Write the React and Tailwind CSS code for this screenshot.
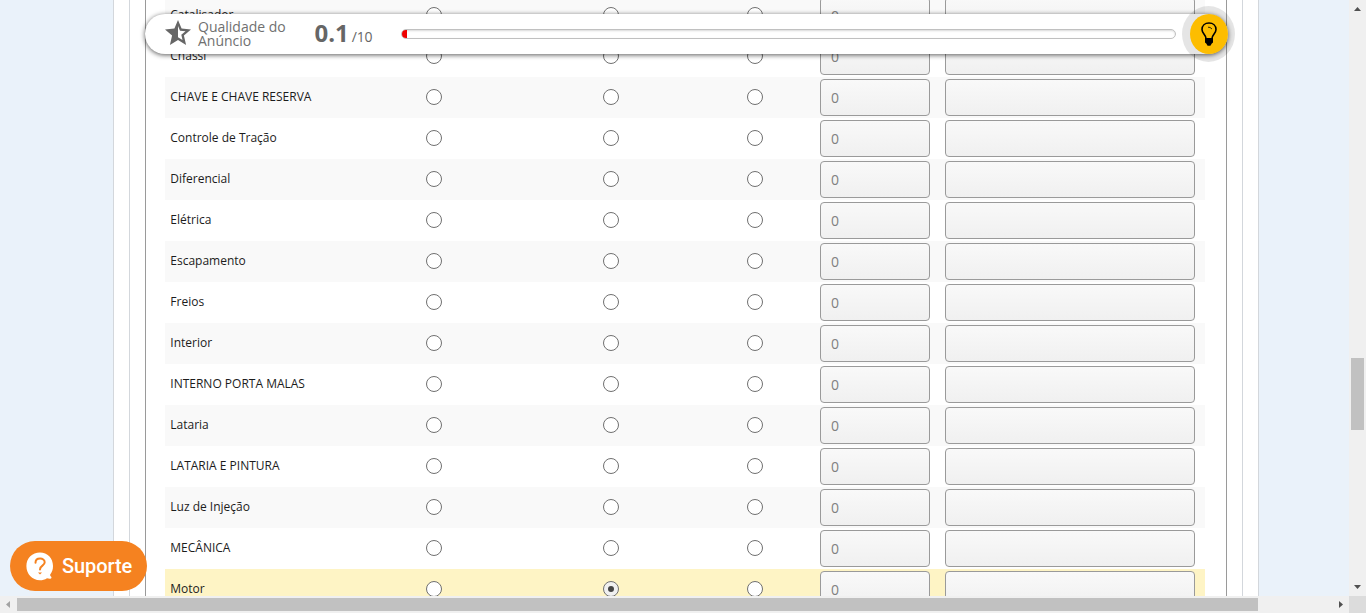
const rows = [
  'Catalisador',
  'Chassi',
  'CHAVE E CHAVE RESERVA',
  'Controle de Tração',
  'Diferencial',
  'Elétrica',
  'Escapamento',
  'Freios',
  'Interior',
  'INTERNO PORTA MALAS',
  'Lataria',
  'LATARIA E PINTURA',
  'Luz de Injeção',
  'MECÂNICA',
  'Motor',
];

function Radio({ checked }) {
  return (
    <span
      className={`flex size-4 items-center justify-center rounded-full border border-[#707070] ${checked ? 'bg-[#f0f0f0]' : 'bg-white'}`}
    >
      {checked && <span className="size-1.5 rounded-full bg-[#444]" />}
    </span>
  );
}

function Row({ label, index }) {
  const selected = label === 'Motor';
  const bg = selected ? 'bg-[#fef4c5]' : index % 2 === 0 ? 'bg-[#f9f9f9]' : 'bg-white';
  return (
    <div className={`grid h-[41px] shrink-0 grid-cols-[261px_177px_144px_73px_125px_250px] items-start ${bg}`}>
      <span className="pt-[11px] pl-[5.3px] text-[12px] leading-[18px] whitespace-nowrap text-[#1c1c1c]">{label}</span>
      <div className="pt-3"><Radio /></div>
      <div className="pt-3"><Radio checked={selected} /></div>
      <div className="pt-3"><Radio /></div>
      <div className="mt-0.5 flex h-[37px] w-[110px] items-center rounded-[4px] border border-[#9a9a9a] bg-linear-to-b from-[#f9f9f9] to-[#f0f0f0] pl-[10px] text-[14px] text-[#808080]">
        0
      </div>
      <div className="mt-0.5 h-[37px] w-[250px] rounded-[4px] border border-[#9a9a9a] bg-linear-to-b from-[#f9f9f9] to-[#f0f0f0]" />
    </div>
  );
}

function QualityBar() {
  return (
    <div className="absolute top-[14px] left-[145px] flex h-10 w-[1083px] items-center rounded-[20px] bg-white shadow-[0_1px_5px_rgba(0,0,0,0.65)]">
      <svg className="ml-5 -mt-0.5 size-[26px] shrink-0" viewBox="0 0 26 26" fill="#666">
        <path
          fillRule="evenodd"
          d="M13 0 L16.6 8.6 L26 9.4 L18.9 15.5 L21.1 25 L13 20 L4.9 25 L7.1 15.5 L0 9.4 L9.4 8.6 Z M13 6 V17.2 L17.5 20 L16.3 14.8 L20.5 11.3 L15 10.8 Z"
        />
      </svg>
      <div className="ml-[7px] w-[116.5px] shrink-0 text-[14px] leading-[14px] text-[#707070]">
        Qualidade do
        <br />
        Anúncio
      </div>
      <div className="-mt-[3px] flex w-[86.5px] shrink-0 items-baseline text-[#666]">
        <span className="text-[24px] leading-[34px] font-bold">0.1</span>
        <span className="ml-[3px] text-[14px] tracking-[-0.2px]">/10</span>
      </div>
      <div className="h-[10px] w-[775px] shrink-0 overflow-hidden rounded-[5px] border border-[#c0c0c0] bg-white shadow-[inset_0_1px_2px_rgba(0,0,0,0.15)]">
        <div className="-mt-px -ml-px h-[10px] w-[6px] bg-[#e00]" />
      </div>
      <div className="absolute top-[-8px] left-[1037px] flex h-14 w-[53px] items-center justify-center rounded-[50%] bg-black/10">
        <div className="flex h-10 w-[38px] items-center justify-center rounded-[50%] bg-[#fdbd00]">
          <svg className="h-6 w-4" viewBox="0 0 16 24" fill="none">
            <path d="M5 16.5 C5 13 1 11.5 1 7.5 C1 3.6 4 1 8 1 S15 3.6 15 7.5 C15 11.5 11 13 11 16.5" stroke="#000" strokeWidth="1.6" />
            <path d="M7 5.2 Q9 4.8 11 7" stroke="#000" strokeWidth=".8" />
            <path d="M4 16 H12 V20.5 L10.8 21.5 L9.4 23.7 H6.6 L5.2 21.5 L4 20.5 Z" fill="#000" />
          </svg>
        </div>
      </div>
    </div>
  );
}

function SupportButton() {
  return (
    <div className="absolute top-[541px] left-[10px] flex h-[50px] w-[137px] items-center rounded-[25px] bg-[#f58220] text-white">
      <svg className="ml-4 h-[29px] w-[28px] shrink-0" viewBox="0 0 28 29" fill="none">
        <path d="M14 0.5 C21.5 .5 27 6.2 27 14 C27 17.6 26.2 19.8 24.2 22.5 C23.7 24 25.5 24.6 25.5 25.4 C25 27.6 22.5 26.4 21 26.2 C18.8 27.6 16.5 28.2 14 28.2 C6 28.2 .4 22 .4 14 C.4 6.2 6.3 .5 14 .5 Z" fill="#fff" />
        <path d="M9.5 10.7 C9.5 5.3 18.7 5.3 18.7 10.3 C18.7 14 14 13.4 14 17.5" stroke="#f58220" strokeWidth="2" strokeLinecap="round" />
        <path d="M12 20.5 H16 L14 22.6 Z" fill="#f58220" />
      </svg>
      <span className="ml-2 font-[Roboto,sans-serif] text-[20px] font-medium tracking-[-0.1px]">Suporte</span>
    </div>
  );
}

export default function App() {
  return (
    <div className="relative grid h-[613px] w-[1366px] grid-cols-[1349px_17px] grid-rows-[596px_17px] overflow-hidden bg-[#f0f0f0] font-['Open_Sans',sans-serif]">
      <main className="flex justify-center overflow-hidden bg-[#eaf2fa] pl-[23px]">
        <div className="w-[1146px] shrink-0 border-x border-[#d3d7dc] bg-white px-[15px]">
          <div className="h-full border-x border-[#d3d7dc] px-[15px]">
            <div className="flex h-full flex-col overflow-hidden border-x border-[#9a9a9a] pr-[21px] pl-[19px]">
              <div className="-mt-[5px] flex flex-col">
                {rows.map((label, index) => (
                  <Row key={label} label={label} index={index} />
                ))}
              </div>
            </div>
          </div>
        </div>
      </main>

      <div className="flex flex-col items-center bg-[#f0f0f0]">
        <svg className="h-[17px] w-[17px]" viewBox="0 0 17 17" fill="#505050">
          <path d="M5 11 L8.5 7 L12 11 Z" />
        </svg>
        <div className="mt-[341px] h-[72px] w-[13px] bg-[#c1c1c1]" />
        <svg className="mt-auto h-[17px] w-[17px]" viewBox="0 0 17 17" fill="#505050">
          <path d="M5 6 L8.5 10 L12 6 Z" />
        </svg>
      </div>

      <div className="flex items-center bg-[#f0f0f0]">
        <svg className="h-[17px] w-[17px]" viewBox="0 0 17 17" fill="#a3a3a3">
          <path d="M10 5 L6 8.5 L10 12 Z" />
        </svg>
        <div className="h-[13px] w-[1241px] bg-[#c1c1c1]" />
        <svg className="ml-auto h-[17px] w-[17px]" viewBox="0 0 17 17" fill="#505050">
          <path d="M7 5 L11 8.5 L7 12 Z" />
        </svg>
      </div>
      <div className="bg-[#dcdcdc]" />

      <QualityBar />
      <SupportButton />
    </div>
  );
}
